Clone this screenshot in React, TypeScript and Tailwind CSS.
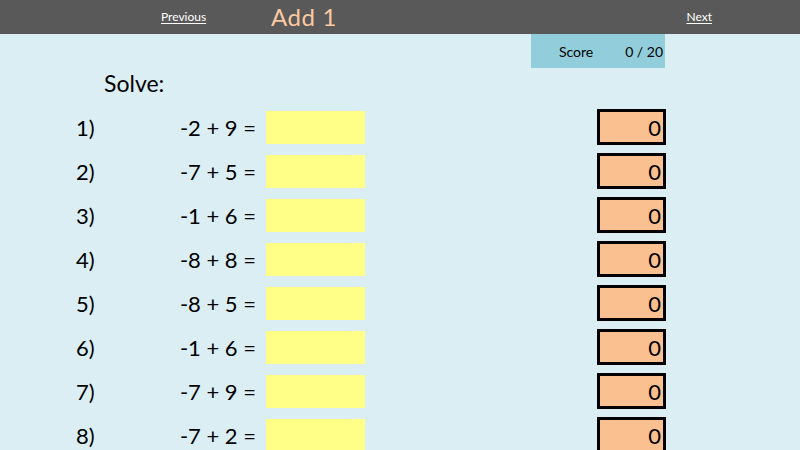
export default function App() {
  const rows = [
    ["1)", "-2 + 9 ="],
    ["2)", "-7 + 5 ="],
    ["3)", "-1 + 6 ="],
    ["4)", "-8 + 8 ="],
    ["5)", "-8 + 5 ="],
    ["6)", "-1 + 6 ="],
    ["7)", "-7 + 9 ="],
    ["8)", "-7 + 2 ="],
  ];

  return (
    <div
      className="w-[800px] h-[450px] overflow-hidden bg-[#daeef3] text-black"
      style={{ fontFamily: "Lato, 'Open Sans', sans-serif" }}
    >
      {/* Top bar */}
      <div className="h-[34px] bg-[#595959] flex items-center">
        <a className="ml-[161px] w-[110px] text-[12px] text-white underline underline-offset-2">Previous</a>
        <span className="text-[24px] leading-none text-[#fac9a0] tracking-wide">Add 1</span>
        <a className="ml-auto mr-[88px] text-[12px] text-white underline underline-offset-2">Next</a>
      </div>

      {/* Score */}
      <div className="ml-[531px] w-[134px] h-[34px] bg-[#92cddc] flex items-center text-[14px]">
        <span className="ml-[28px]">Score</span>
        <span className="ml-auto mr-[2px]">0 / 20</span>
      </div>

      <div className="h-[36px] flex items-center pl-[104px] pb-[5px] text-[23px]">Solve:</div>

      {/* Questions */}
      <div className="flex flex-col pt-[1px]">
        {rows.map(([n, q]) => (
          <div key={n} className="h-[44px] flex items-center text-[22px]">
            <span className="ml-[76px] w-[60px]">{n}</span>
            <span className="w-[120px] text-right">{q}</span>
            <div className="ml-[10px] w-[99px] h-[33px] bg-[#ffff88]" />
            <div className="ml-[232px] w-[69px] h-[36px] border-[3px] border-black bg-[#fac090] flex items-center justify-end pr-[2px]">
              0
            </div>
          </div>
        ))}
      </div>
    </div>
  );
}
